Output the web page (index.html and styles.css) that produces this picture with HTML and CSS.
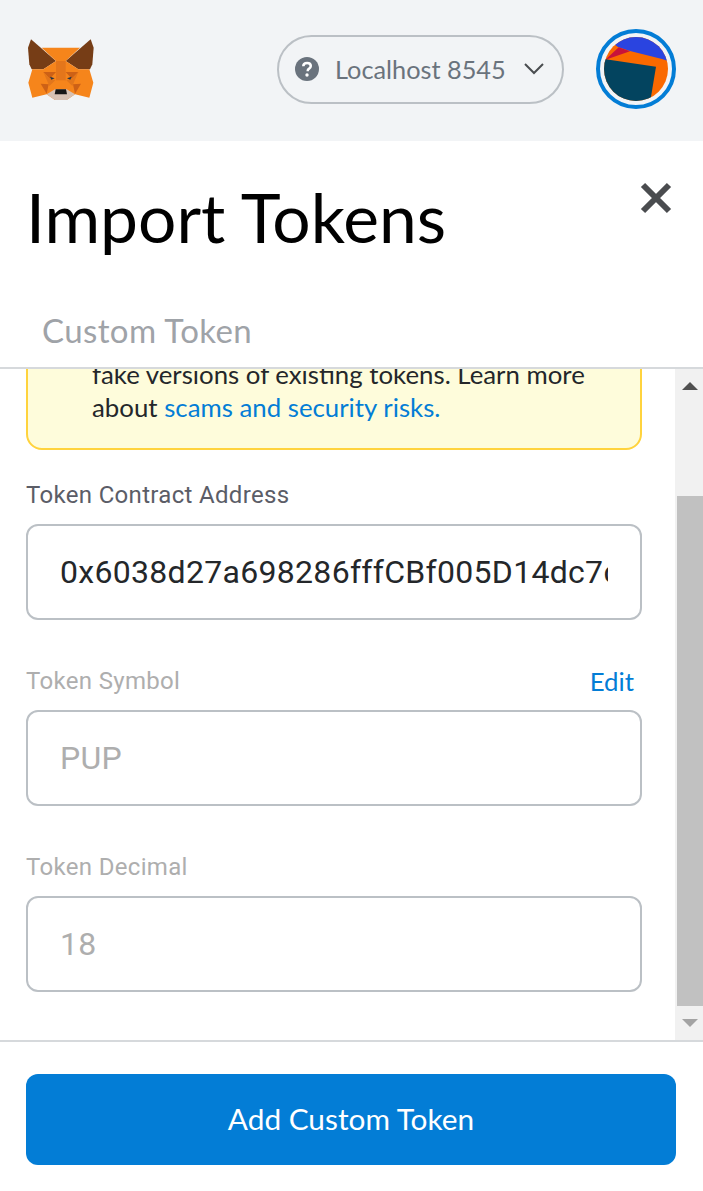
FILE: index.html
```html
<!DOCTYPE html>
<html lang="en">
<head>
<meta charset="utf-8">
<title>Import Tokens</title>
<link rel="stylesheet" href="styles.css">
</head>
<body>
<div class="app">
  <header class="topbar">
    <svg class="fox" viewBox="84 114 198 186" aria-hidden="true">
      <polygon fill="#763d16" points="93,115 168,180 130,205 95,205 88,190 84,140"/>
      <polygon fill="#763d16" points="272,115 197,180 235,205 270,205 277,190 281,140"/>
      <polygon fill="#f6851b" points="125,140 240,140 197,180 168,180"/>
      <polygon fill="#f6851b" points="97,205 130,205 168,180 197,180 235,205 268,205 280,245 268,290 225,280 200,297 165,297 140,280 97,290 85,245"/>
      <polygon fill="#e4761b" points="168,180 197,180 197,240 168,240"/>
      <polygon fill="#cd6116" points="130,213 168,213 150,233"/>
      <polygon fill="#cd6116" points="235,213 197,213 215,233"/>
      <polygon fill="#e2761b" points="130,213 150,233 166,238 148,255"/>
      <polygon fill="#e2761b" points="235,213 215,233 199,238 217,255"/>
      <polygon fill="#f6851b" points="168,238 197,238 197,265 168,265"/>
      <polygon fill="#233447" points="150,227 164,232 154,236"/>
      <polygon fill="#233447" points="215,227 201,232 211,236"/>
      <polygon fill="#cd6116" points="122,248 146,250 140,278"/>
      <polygon fill="#cd6116" points="243,248 219,250 225,278"/>
      <polygon fill="#d7c1b3" points="140,280 165,265 200,265 225,280 200,297 165,297"/>
      <polygon fill="#161616" points="167,265 198,265 201,280 164,280"/>
    </svg>
    <div class="network">
      <svg class="help" viewBox="0 0 24 24" aria-hidden="true">
        <circle cx="12" cy="12" r="12" fill="#6a737d"/>
        <path d="M8.300 9.300c0-2 1.600-3.300 3.800-3.300s3.700 1.200 3.700 3-1.500 2.400-2.400 3.200c-.6.600-.7 1-.7 2" fill="none" stroke="#fff" stroke-width="2.500"/>
        <circle cx="12" cy="18" r="1.700" fill="#fff"/>
      </svg>
      <span class="network-name">Localhost 8545</span>
      <svg class="chev" viewBox="0 0 22 14" aria-hidden="true"><path d="M2 2l9 9 9-9" fill="none" stroke="#4a4d50" stroke-width="2"/></svg>
    </div>
    <div class="avatar-ring">
      <svg class="avatar" viewBox="0 0 64 64" aria-hidden="true">
        <rect width="64" height="64" fill="#fa6900"/>
        <polygon fill="#2a44e0" points="0,0 64,0 64,24 58,22 26,14 14,10"/>
        <polygon fill="#c8133a" points="0,24 14.700,10.300 26,14.300 3.700,22"/>
        <polygon fill="#03445f" points="0,22 52,29.700 46.300,64 0,64"/>
      </svg>
    </div>
  </header>

  <main class="page">
    <div class="page-head">
      <h1 class="title">Import Tokens</h1>
      <svg class="close" viewBox="0 0 32 32" aria-hidden="true"><path d="M3 3l26 26M29 3L3 29" stroke="#4a4c4f" stroke-width="6" fill="none"/></svg>
    </div>
    <div class="tab"><span class="tab-label">Custom Token</span></div>

    <div class="scroller">
      <div class="scroll-clip">
        <form class="form">
          <div class="notice">
            <p class="notice-text">Anyone can create a token, including creating<br>fake versions of existing tokens. Learn more<br>about <a class="link">scams and security risks.</a></p>
          </div>
          <div class="field">
            <div class="label-row"><label class="label">Token Contract Address</label></div>
            <div class="input"><span class="value">0x6038d27a698286fffCBf005D14dc7c3fE2</span></div>
          </div>
          <div class="field">
            <div class="label-row"><label class="label muted">Token Symbol</label><a class="edit">Edit</a></div>
            <div class="input disabled"><span class="value">PUP</span></div>
          </div>
          <div class="field">
            <div class="label-row"><label class="label muted">Token Decimal</label></div>
            <div class="input disabled"><span class="value">18</span></div>
          </div>
        </form>
      </div>
      <div class="scrollbar">
        <div class="sb-btn"><span class="arrow-up"></span></div>
        <div class="sb-track"><div class="sb-thumb"></div></div>
        <div class="sb-btn sb-btn-end"><span class="arrow-down"></span></div>
      </div>
    </div>

    <footer class="footer">
      <button class="primary" type="button">Add Custom Token</button>
    </footer>
  </main>
</div>
</body>
</html>
```

FILE: styles.css
```css
* { box-sizing: border-box; }

html, body {
  margin: 0;
  height: 100%;
  background: #fff;
}

body {
  font-family: "Lato", "Liberation Sans", sans-serif;
  overflow: hidden;
}

.app {
  height: 1191px;
  display: flex;
  flex-direction: column;
}

.topbar {
  flex: 0 0 141px;
  background: #f2f4f6;
  display: flex;
  align-items: center;
  padding: 0 27px 4px 28px;
}

.fox {
  width: 66px;
  height: 62px;
  margin-right: auto;
  margin-top: 2px;
}

.network {
  width: 287px;
  height: 69px;
  margin-right: 32px;
  margin-top: 1px;
  border: 2px solid #bbc0c5;
  border-radius: 35px;
  display: flex;
  align-items: center;
  padding: 0 17px 0 16px;
}

.help {
  width: 24px;
  height: 24px;
  flex: none;
}

.network-name {
  margin-left: 16px;
  font-size: 25.300px;
  color: #6a737d;
  white-space: nowrap;
}

.chev {
  width: 22px;
  height: 14px;
  margin-left: auto;
}

.avatar-ring {
  width: 80px;
  height: 80px;
  border: 4px solid #037dd6;
  border-radius: 50%;
  padding: 4px;
  display: flex;
}

.avatar {
  width: 64px;
  height: 64px;
  border-radius: 50%;
}

.page {
  flex: 1;
  display: flex;
  flex-direction: column;
  min-height: 0;
}

.page-head {
  flex: 0 0 143px;
  display: flex;
  align-items: flex-start;
  justify-content: space-between;
  padding: 36px 31px 0 26px;
}

.title {
  margin: 0;
  font-size: 67.700px;
  line-height: 80px;
  font-weight: 400;
  color: #000;
}

.close {
  width: 32px;
  height: 32px;
  margin-top: 5px;
}

.tab {
  flex: 0 0 87px;
  padding: 26px 0 0 42px;
  border-bottom: 2px solid #d6d9dc;
  margin-top: -2px;
}

.tab-label {
  font-size: 33px;
  letter-spacing: .4px;
  line-height: 44px;
  color: #9fa3a8;
}

.scroller {
  flex: 0 0 671px;
  display: flex;
  min-height: 0;
}

.scroll-clip {
  flex: 1;
  min-width: 0;
  overflow: hidden;
  display: flex;
  flex-direction: column;
  justify-content: flex-end;
}

.form {
  padding: 0 33px 48px 26px;
  display: flex;
  flex-direction: column;
}

.notice {
  background: #fefcdb;
  border: 2px solid #ffd33d;
  border-radius: 16px;
  padding: 16px 20px 24px 64px;
}

.notice-text {
  margin: 0;
  font-size: 25.800px;
  line-height: 33px;
  color: #24272a;
  white-space: nowrap;
}

.link {
  color: #037dd6;
}

.field {
  display: flex;
  flex-direction: column;
  margin-top: 27px;
}

.field + .field {
  margin-top: 43px;
}

.label-row {
  display: flex;
  justify-content: space-between;
  align-items: center;
  height: 36px;
  margin-bottom: 11px;
  padding-right: 8px;
}

.label {
  font-family: "Roboto", sans-serif;
  font-size: 24px;
  letter-spacing: .32px;
  color: #5b5d67;
}

.label.muted {
  color: #aeaeae;
}

.edit {
  font-size: 25.800px;
  line-height: 34px;
  color: #037dd6;
}

.input {
  height: 96px;
  border: 2px solid #bbc0c5;
  border-radius: 12px;
  padding: 0 32px;
  display: flex;
  align-items: center;
  font-family: "Roboto", sans-serif;
  font-size: 32px;
  letter-spacing: .3px;
  color: #24272a;
}

.value {
  flex: 1;
  min-width: 0;
  overflow: hidden;
  white-space: nowrap;
}

.input.disabled {
  color: #aeaeae;
}

.scrollbar {
  flex: 0 0 28px;
  background: #f1f1f1;
  display: flex;
  flex-direction: column;
}

.sb-btn {
  flex: 0 0 34px;
  display: flex;
  justify-content: center;
  align-items: center;
  padding-left: 2px;
}

.sb-btn-end {
  flex-basis: 34px;
}

.arrow-up {
  border-left: 8px solid transparent;
  border-right: 8px solid transparent;
  border-bottom: 8px solid #505050;
}

.arrow-down {
  border-left: 8px solid transparent;
  border-right: 8px solid transparent;
  border-top: 8px solid #a3a3a3;
}

.sb-track {
  flex: 1;
  padding: 93px 0 0 2px;
}

.sb-thumb {
  height: 510px;
  background: #c1c1c1;
}

.footer {
  flex: 1;
  border-top: 2px solid #d6d9dc;
  padding: 32px 27px 0 26px;
}

.primary {
  display: block;
  width: 100%;
  height: 91px;
  border: 0;
  border-radius: 12px;
  padding: 0 0 2px;
  background: #037dd6;
  color: #fff;
  font-family: inherit;
  font-size: 29.800px;
}
```
